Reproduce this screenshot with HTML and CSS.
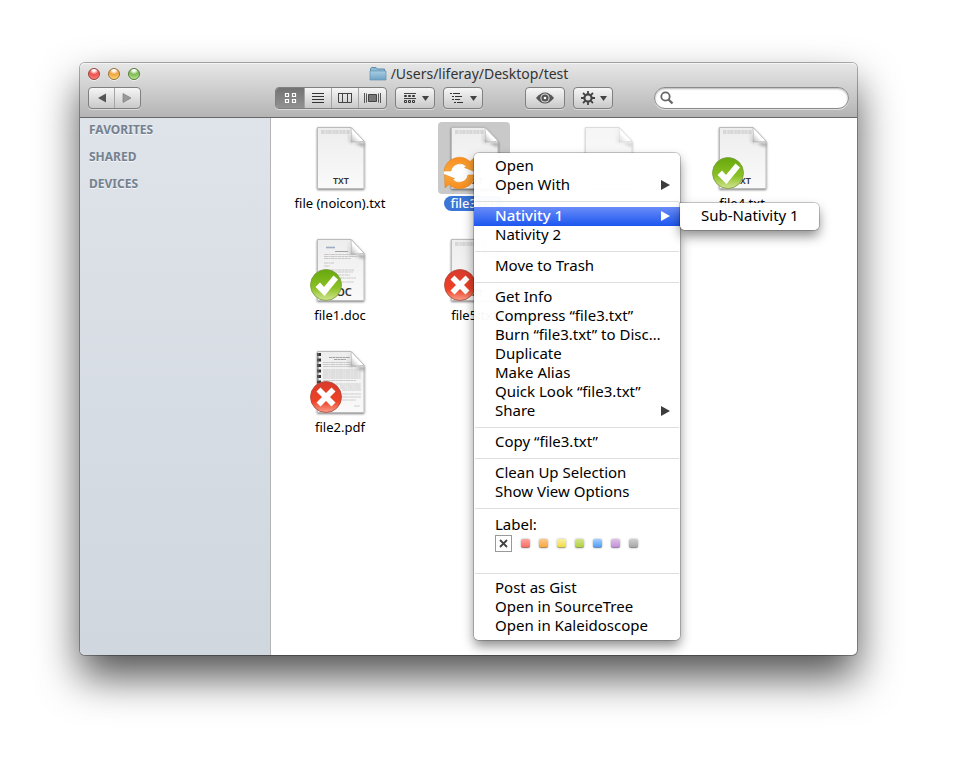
FILE: index.html
```html
<!DOCTYPE html>
<html lang="en">
<head>
<meta charset="utf-8">
<title>/Users/liferay/Desktop/test</title>
<link rel="stylesheet" href="styles.css">
</head>
<body>
<svg class="defs" aria-hidden="true">
  <defs>
    <linearGradient id="paper" x1="0" y1="0" x2="0" y2="1"><stop offset="0" stop-color="#ededed"/><stop offset="1" stop-color="#fafafa"/></linearGradient>
    <linearGradient id="curl" x1="1" y1="0" x2="0" y2="1"><stop offset=".35" stop-color="#fff"/><stop offset=".6" stop-color="#fff"/><stop offset="1" stop-color="#b5b5b5"/></linearGradient>
    <linearGradient id="green" x1="0" y1="0" x2="0" y2="1"><stop offset="0" stop-color="#66a80c"/><stop offset=".6" stop-color="#8cc126"/><stop offset="1" stop-color="#d2e693"/></linearGradient>
    <linearGradient id="red" x1="0" y1="0" x2="0" y2="1"><stop offset="0" stop-color="#d93a2c"/><stop offset=".65" stop-color="#ee4226"/><stop offset="1" stop-color="#f8a18d"/></linearGradient>
    <linearGradient id="orange" x1="0" y1="0" x2="0" y2="1"><stop offset="0" stop-color="#fba73a"/><stop offset="1" stop-color="#f98d1f"/></linearGradient>
    <linearGradient id="folder" x1="0" y1="0" x2="0" y2="1"><stop offset="0" stop-color="#a9cde3"/><stop offset="1" stop-color="#6ea3c5"/></linearGradient>
    <filter id="soft" x="-20%" y="-20%" width="140%" height="140%"><feDropShadow dx="0" dy="1" stdDeviation="1" flood-opacity=".5"/></filter>
    <filter id="blur" x="-30%" y="-30%" width="160%" height="160%"><feGaussianBlur stdDeviation="1.5"/></filter>
    <symbol id="page" viewBox="0 0 72 72">
      <path d="M13.500 5.500H47L60 19V66.500H13.500Z" fill="url(#paper)" stroke="#bbb" filter="url(#soft)"/>
      <path d="M46 6V21H60V25L45 19Z" fill="#777" opacity=".7" filter="url(#blur)"/>
      <path d="M47 5.500L60 19C56 20 51 20 47 20C47.500 15 47.500 10 47 5.500Z" fill="url(#curl)" stroke="#aaa" stroke-width=".6"/>
    </symbol>
    <symbol id="ok" viewBox="0 0 72 72">
      <circle cx="22" cy="51" r="15.500" fill="url(#green)" stroke="#7a9a44" stroke-width=".8"/>
      <path d="M11.500 53L16 48.500L20 53L29.500 41.500L34 45.500L20.500 62Z" fill="#fff"/>
    </symbol>
    <symbol id="fail" viewBox="0 0 72 72">
      <circle cx="22" cy="51" r="15.500" fill="url(#red)" stroke="#a84a3e" stroke-width=".8"/>
      <path d="M16.500 41.500L22 47L27.500 41.500L31.500 45.500L26 51L31.500 56.500L27.500 60.500L22 55L16.500 60.500L12.500 56.500L18 51L12.500 45.500Z" fill="#fff"/>
    </symbol>
    <path id="arrow" d="M6.500 52.500L16.500 56.500L14.500 57.500A9 9 0 0 0 30 53L37 53A15.500 15.500 0 0 1 11 62.500L7 66Z" fill="url(#orange)" stroke="#d98018" stroke-width=".5"/>
    <symbol id="sync" viewBox="0 0 72 72">
      <path d="M6 49.500L13 46A11 11 0 1 1 17 58L6 52.500Z" fill="#fff"/>
      <use href="#arrow"/>
      <use href="#arrow" transform="rotate(180 21.500 51)"/>
    </symbol>
    <symbol id="tiny" viewBox="0 0 72 72">
      <path d="M17 9H46M17 11H46" stroke="#999" stroke-width=".9" stroke-dasharray="3 .4 1 .3 2 .4" opacity=".6"/>
    </symbol>
  </defs>
</svg>

<main class="window">
  <header class="chrome">
    <div class="titlebar">
      <div class="lights">
        <button class="light close" aria-label="Close"></button>
        <button class="light minimize" aria-label="Minimize"></button>
        <button class="light expand" aria-label="Zoom"></button>
      </div>
      <h1 class="title">
        <svg width="18" height="16" viewBox="0 0 18 16"><path d="M1.500 13.500V2.500L2.500 1.500H7L8.500 3H15.500V13.500Z" fill="#8db9d3" stroke="#5f8dab"/><path d="M1 5H17V14H1Z" fill="url(#folder)" stroke="#6292b1" stroke-width=".7"/></svg>
        /Users/liferay/Desktop/test
      </h1>
    </div>
    <div class="toolbar">
      <div class="group nav">
        <button aria-label="Back"><svg width="25" height="20" viewBox="0 0 25 20"><path d="M17 5.500V14.500L9 10Z" fill="#555"/></svg></button>
        <button aria-label="Forward"><svg width="25" height="20" viewBox="0 0 25 20"><path d="M8 5.500V14.500L16 10Z" fill="#999" stroke="#777" stroke-width=".6"/></svg></button>
      </div>
      <div class="group views">
        <button class="on" aria-label="Icons"><svg width="28" height="20" viewBox="0 0 28 20" fill="none" stroke="#fff" stroke-width="1.200"><path d="M9.500 5.500h3v3h-3zM16.500 5.500h3v3h-3zM9.500 11.500h3v3h-3zM16.500 11.500h3v3h-3z"/></svg></button>
        <button aria-label="List"><svg width="26" height="20" viewBox="0 0 26 20" stroke="#333"><path d="M7 5.500H19M7 8.500H19M7 11.500H19M7 14.500H19"/></svg></button>
        <button aria-label="Columns"><svg width="26" height="20" viewBox="0 0 26 20" fill="none" stroke="#444"><path d="M6.500 5.500H19.500V14.500H6.500ZM10.500 5V15M15.500 5V15M6 5.500H20"/></svg></button>
        <button aria-label="Cover Flow"><svg width="27" height="20" viewBox="0 0 27 20"><path d="M9.500 6.500H17.500V13.500H9.500Z" fill="#777" stroke="#444"/><path d="M5.500 5V15M7.500 5.500V14.500M19.500 5.500V14.500M21.500 5V15" stroke="#555" fill="none"/></svg></button>
      </div>
      <div class="group single">
        <button aria-label="Arrange"><svg width="38" height="20" viewBox="0 0 38 20"><path d="M8 5.500H20M8 10.500H20" stroke="#444"/><path d="M8.500 7.500h2v1h-2zM12.500 7.500h2v1h-2zM16.500 7.500h2v1h-2zM8.500 12.500h2v2h-2zM12.500 12.500h2v2h-2zM16.500 12.500h2v2h-2z" fill="none" stroke="#333"/><path d="M26 8H33L29.500 13Z" fill="#444"/></svg></button>
      </div>
      <div class="group single">
        <button aria-label="Group"><svg width="38" height="20" viewBox="0 0 38 20"><path d="M6 5.500H8M9 5.500H16M8 8.500H10M11 8.500H18M8 11.500H10M11 11.500H16M10 14.500H12M13 14.500H19" stroke="#333"/><path d="M26 8H33L29.500 13Z" fill="#444"/></svg></button>
      </div>
      <div class="group single eye">
        <button aria-label="Quick Look"><svg width="38" height="20" viewBox="0 0 38 20"><path d="M10 10Q19 -1 28 10Q19 21 10 10Z" fill="#555"/><circle cx="19" cy="10" r="4.600" fill="#ddd"/><circle cx="19" cy="10" r="3.600" fill="#555"/><circle cx="19" cy="10" r="1.300" fill="#fff"/></svg></button>
      </div>
      <div class="group single">
        <button aria-label="Action"><svg width="38" height="20" viewBox="0 0 38 20"><circle cx="14" cy="10" r="3.600" fill="none" stroke="#444" stroke-width="2.200"/><path d="M14 3V6M14 14V17M7 10H10M18 10H21M9 5L11.200 7.200M16.800 12.800L19 15M19 5L16.800 7.200M11.200 12.800L9 15" stroke="#444" stroke-width="1.800"/><path d="M26 8H33L29.500 13Z" fill="#444"/></svg></button>
      </div>
      <div class="search">
        <svg width="14" height="14" viewBox="0 0 14 14" fill="none" stroke="#666"><circle cx="5.500" cy="5.500" r="4.200" stroke-width="1.800"/><path d="M8.500 8.500L12.500 12.500" stroke-width="2.300"/></svg>
        <input type="search" aria-label="Search">
      </div>
    </div>
  </header>

  <div class="content">
    <nav class="sidebar">
      <h2>FAVORITES</h2>
      <h2>SHARED</h2>
      <h2>DEVICES</h2>
    </nav>
    <section class="files">
      <figure class="file">
        <svg class="icon" viewBox="0 0 72 72"><use href="#page"/><use href="#tiny"/><text class="ext" x="37" y="62">TXT</text></svg>
        <figcaption>file (noicon).txt</figcaption>
      </figure>
      <figure class="file selected">
        <svg class="icon" viewBox="0 0 72 72"><use href="#page"/><use href="#tiny"/><text class="ext" x="37" y="62">TXT</text><use href="#sync"/></svg>
        <figcaption>file3.txt</figcaption>
      </figure>
      <figure class="file faded">
        <svg class="icon" viewBox="0 0 72 72"><use href="#page"/></svg>
      </figure>
      <figure class="file">
        <svg class="icon" viewBox="0 0 72 72"><use href="#page"/><use href="#tiny"/><text class="ext" x="37" y="62">TXT</text><use href="#ok"/></svg>
        <figcaption>file4.txt</figcaption>
      </figure>
      <figure class="file first">
        <svg class="icon" viewBox="0 0 72 72"><use href="#page"/>
          <path d="M22 13.500H31" stroke="#4f6f96" stroke-width="1.600" opacity=".5"/><path d="M31 17.500H44" stroke="#666" stroke-width=".8" opacity=".7"/>
          <path d="M20 20.500H52M20 22.500H53M20 24.500H47M20 29H30M20 32H26M20 36H50M20 38H49M20 41H46M36 44H52M36 48H50" stroke="#999" stroke-width=".7" stroke-dasharray="4 .4 2 .4" opacity=".65"/>
          <text class="ext large" x="36" y="62">DOC</text><use href="#ok"/></svg>
        <figcaption>file1.doc</figcaption>
      </figure>
      <figure class="file">
        <svg class="icon" viewBox="0 0 72 72"><use href="#page"/><use href="#tiny"/><text class="ext" x="37" y="62">TXT</text><use href="#fail"/></svg>
        <figcaption>file5.txt</figcaption>
      </figure>
      <figure class="file first">
        <svg class="icon" viewBox="0 0 72 72"><use href="#page"/>
          <path d="M15 7V40" stroke="#333" stroke-width="4" stroke-dasharray="3 2.500"/><path d="M14 7V36" stroke="#777"/>
          <path d="M25 11.500H46M30 13.500H42" stroke="#777" stroke-width=".8" stroke-dasharray="3 .4" opacity=".8"/>
          <path d="M19 16.500H48M19 18.500H48M19 20.500H52M19 24H57M19 26H57M19 28H57M19 30H57M19 32H57M19 34.500H52M19 38H57M36 40H57M36 42H57M38 44H57M38 48H57M38 51H57M38 54H52M50 60H56" stroke="#999" stroke-width=".8" stroke-dasharray="5 .3 2 .3" opacity=".55"/>
          <use href="#fail"/></svg>
        <figcaption>file2.pdf</figcaption>
      </figure>
    </section>
  </div>

  <div class="menu context">
    <button>Open</button>
    <button class="more">Open With</button>
    <hr>
    <div class="parent">
      <button class="more active">Nativity 1</button>
      <div class="menu submenu"><button>Sub-Nativity 1</button></div>
    </div>
    <button>Nativity 2</button>
    <hr>
    <button>Move to Trash</button>
    <hr>
    <button>Get Info</button>
    <button>Compress “file3.txt”</button>
    <button>Burn “file3.txt” to Disc…</button>
    <button>Duplicate</button>
    <button>Make Alias</button>
    <button>Quick Look “file3.txt”</button>
    <button class="more">Share</button>
    <hr>
    <button>Copy “file3.txt”</button>
    <hr>
    <button>Clean Up Selection</button>
    <button>Show View Options</button>
    <hr>
    <div class="labels">
      <p>Label:</p>
      <div class="swatches">
        <button class="none" aria-label="No label"><svg width="15" height="15" viewBox="0 0 15 15"><path d="M4 4L11 11M11 4L4 11" stroke="#444" stroke-width="1.800"/></svg></button>
        <button class="swatch red" aria-label="Red"></button>
        <button class="swatch orange" aria-label="Orange"></button>
        <button class="swatch yellow" aria-label="Yellow"></button>
        <button class="swatch green" aria-label="Green"></button>
        <button class="swatch blue" aria-label="Blue"></button>
        <button class="swatch purple" aria-label="Purple"></button>
        <button class="swatch gray" aria-label="Gray"></button>
      </div>
    </div>
    <hr>
    <button>Post as Gist</button>
    <button>Open in SourceTree</button>
    <button>Open in Kaleidoscope</button>
  </div>
</main>
</body>
</html>
```
FILE: styles.css
```css
* { box-sizing: border-box; }

body {
  display: flex;
  min-height: 100vh;
  margin: 0;
  padding: 63px 96px 109px 80px;
  background: #fff;
  color: #000;
  font-family: "Noto Sans", "Open Sans", sans-serif;
}

button {
  margin: 0;
  padding: 0;
  border: 0;
  background: none;
  color: inherit;
  font: inherit;
}

svg { display: block; flex: none; }
.defs { position: absolute; width: 0; height: 0; }

.window {
  position: relative;
  display: flex;
  flex: 1;
  flex-direction: column;
  min-width: 0;
  border-radius: 5px;
  background: #fff;
  box-shadow: 0 0 0 1px rgba(0, 0, 0, .3), 0 22px 42px rgba(0, 0, 0, .68);
}

.chrome {
  display: flex;
  flex-direction: column;
  gap: 3px;
  height: 55px;
  padding: 0 8px;
  border-top: 1px solid #f4f4f4;
  border-bottom: 1px solid #686868;
  border-radius: 5px 5px 0 0;
  background: linear-gradient(#e6e6e6, #b4b4b4);
}

.titlebar {
  display: grid;
  grid-template-columns: 1fr auto 1fr;
  align-items: center;
  height: 20px;
}

.lights { display: flex; gap: 8px; }

.light {
  width: 12px;
  height: 12px;
  border: 1px solid;
  border-radius: 50%;
  box-shadow: 0 1px 0 rgba(255, 255, 255, .6);
}
.close { border-color: #96413d; background: radial-gradient(circle at 50% 10%, #fff 0 12%, #ee514b 45%, #ff8c84); }
.minimize { border-color: #96703a; background: radial-gradient(circle at 50% 10%, #fff 0 12%, #eea33c 45%, #ffe780); }
.expand { border-color: #55793d; background: radial-gradient(circle at 50% 10%, #fff 0 12%, #7dbb52 45%, #c9f29a); }

.title {
  display: flex;
  align-items: center;
  gap: 4px;
  margin: 0;
  color: #333;
  font-size: 14px;
  font-weight: 400;
  line-height: 20px;
  white-space: nowrap;
}

.toolbar { display: flex; align-items: center; height: 22px; }

.group {
  display: flex;
  flex: none;
  height: 22px;
  border: 1px solid #808080;
  border-radius: 4px;
  background: linear-gradient(#f6f6f6, #c9c9c9);
  box-shadow: 0 1px 0 rgba(255, 255, 255, .45);
}
.group button + button { border-left: 1px solid #a5a5a5; }
.group .on { background: linear-gradient(#727272, #929292); border-radius: 3px 0 0 3px; }
.views { margin-left: 134px; }
.single { margin-left: 8px; }
.eye { margin-left: 42px; }

.search {
  display: flex;
  flex: 1;
  align-items: center;
  gap: 4px;
  min-width: 0;
  height: 22px;
  margin-left: 41px;
  padding: 0 5px;
  border: 1px solid #8b8b8b;
  border-radius: 11px;
  background: #fff;
  box-shadow: inset 0 1px 2px rgba(0, 0, 0, .3), 0 1px 0 rgba(255, 255, 255, .5);
}
.search input {
  flex: 1;
  min-width: 0;
  border: 0;
  outline: 0;
  background: none;
  font: inherit;
  font-size: 12px;
}

.content { display: flex; flex: 1; }

.sidebar {
  flex: none;
  width: 191px;
  padding: 3px 9px;
  border-right: 1px solid #b4b4b4;
  border-radius: 0 0 0 5px;
  background: linear-gradient(#dfe3ea, #d0d7df);
}
.sidebar h2 {
  margin: 0 0 9px;
  color: #74818f;
  font-size: 12px;
  font-weight: 700;
  line-height: 18px;
  text-shadow: 0 1px 0 rgba(255, 255, 255, .7);
}

.files {
  display: grid;
  flex: 1;
  grid-template-columns: repeat(4, 134px);
  grid-auto-rows: 112px;
  align-content: start;
  padding: 4px 2px;
}
.file {
  display: flex;
  flex-direction: column;
  align-items: center;
  gap: 2px;
  margin: 0;
  font-size: 13px;
  line-height: 15px;
}
.file.first { grid-column: 1; }
.icon { width: 72px; height: 72px; border-radius: 4px; }
.ext { fill: #333; font-size: 9px; font-weight: 600; text-anchor: middle; }
.ext.large { font-size: 11px; }
.file figcaption { padding: 0 6px; border-radius: 8px; }
.selected .icon { background: #c9c9c9; }
.selected figcaption { background: #3a75d7; color: #fff; font-weight: 500; }
.faded { opacity: .5; }

.menu {
  position: absolute;
  padding: 4px 0;
  border-radius: 5px;
  background: rgba(255, 255, 255, .97);
  box-shadow: 0 0 0 1px rgba(0, 0, 0, .2), 0 6px 12px rgba(0, 0, 0, .45);
  font-size: 15px;
  line-height: 17px;
  white-space: nowrap;
}
.context { top: 90px; left: 394px; width: 206px; }
.submenu { top: -4px; left: 100%; border-radius: 0 5px 5px 5px; }

.menu > button,
.parent > button {
  display: flex;
  align-items: center;
  width: 100%;
  height: 19px;
  padding: 0 20px 2px 21px;
  text-align: left;
}
.parent { position: relative; }
.menu .more { justify-content: space-between; padding-right: 10px; }
.more::after {
  border: solid transparent;
  border-width: 5px 0 5px 9px;
  border-left-color: #3c3c3c;
  content: "";
}
.menu .active { background: linear-gradient(#6a8cf8, #1c56f0); color: #fff; font-weight: 500; }
.active::after { border-left-color: #fff; }

.menu hr {
  height: 1px;
  margin: 6px 1px 5px;
  border: 0;
  background: #dedede;
}

.labels { height: 53px; padding: 0 21px; }
.labels p { margin: 0; line-height: 21px; }
.swatches { display: flex; align-items: center; gap: 9px; }
.none { border: 1px solid #999; }
.swatch {
  width: 9px;
  height: 9px;
  border-bottom: 1px solid rgba(0, 0, 0, .3);
  border-radius: 2px;
  box-shadow: 0 0 2px rgba(0, 0, 0, .4);
}
.swatch.red { background: linear-gradient(#ffa49d, #fa6f66); }
.swatch.orange { background: linear-gradient(#fcc98a, #f8a83f); }
.swatch.yellow { background: linear-gradient(#faf0a0, #f2dc46); }
.swatch.green { background: linear-gradient(#d2e58c, #b2d240); }
.swatch.blue { background: linear-gradient(#a3cfff, #539ef7); }
.swatch.purple { background: linear-gradient(#dfc0ea, #c491da); }
.swatch.gray { background: linear-gradient(#cfcfcf, #a8a8a8); }
```
